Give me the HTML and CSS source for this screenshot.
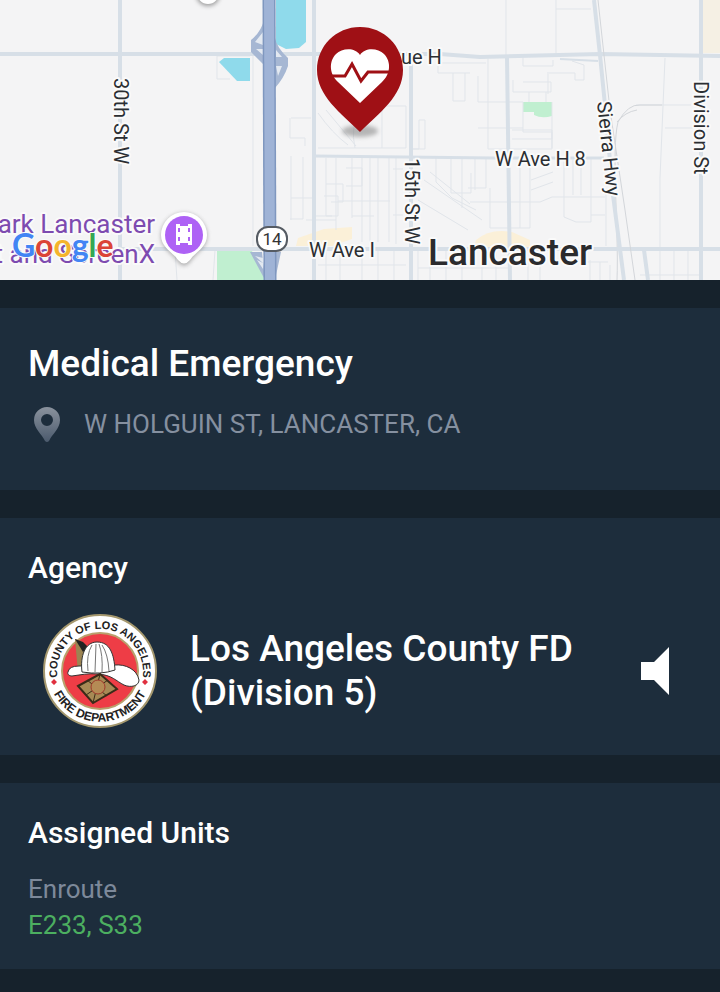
FILE: index.html
```html
<!DOCTYPE html>
<html lang="en">

<head>
    <meta charset="UTF-8">
    <meta name="viewport" content="width=device-width, initial-scale=1.0">
    <title>Medical Emergency</title>
    <link rel="stylesheet" href="styles.css">
</head>

<body>

    <div class="map">
        <svg class="map-canvas" viewBox="0 0 720 280" preserveAspectRatio="xMidYMid slice" role="img" aria-label="Map of Lancaster">
            <defs>
                <filter id="soft" x="-50%" y="-50%" width="200%" height="200%">
                    <feGaussianBlur stdDeviation="2" />
                </filter>
            </defs>
            <rect width="720" height="280" fill="#f4f4f5" />

            <!-- land and water -->
            <path d="M703 0h17v53h-17z" fill="#f5f0e4" />
            <path d="M276 0h30v42l-7 6-13 1-10-5z" fill="#8fdaeb" />
            <path d="M219 62l5-4h26v23h-13z" fill="#8fdaeb" />
            <path d="M217 251h35l13 29h-48z" fill="#c0efd0" />
            <path d="M523 102h29v14q-10 3-18-1v-3h-11z" fill="#c0efd0" />
            <path d="M298 238l26-9 28-2v12l-20 7h-36z" fill="#fbf0d8" />
            <path d="M476 240q14-12 36-8l18 8v8h-56z" fill="#fbf0d8" />

            <!-- small streets -->
            <g fill="none" stroke="#e1e5ea" stroke-width="1">
                <path d="M253 56v190M250 56h-33v23h13" />
                <path d="M291 118h20M290 118v20h15v8M291 156v64M291 198h22M303 157v62h-13M313 106v50" />
                <path d="M318 113q14 20 30 32M326 110l30 36M348 106h58v42h-88M382 106v42M360 107q-10 20-5 41M419 120v29h-8M419 120h6v29h-14" />
                <path d="M326 158v58h12v-20h-14M336 158v72M352 158v60M362 158v84M370 158v84M378 158v84M389 158v84M326 184h17v18h-12M352 216h22M338 201h52M312 216h20M306 220h30M346 168h16v18h-16" />
                <path d="M393 169h10M393 215h10M396 158v86M436 158v24l16 16 24 12M424 180l58 40M418 200l50 30M430 172l40 32M451 158v35h20v-20M462 158v50" />
                <path d="M438 60v13h32M453 73v28h12V73M438 63h48M478 76v26h45M488 59v90M478 128h45M506 0v55M556 0v54M556 9h35" />
                <path d="M523 58v8h30v-6M513 80v12h38V82h-28M548 74v20M547 73h28v7h9V65l-12-4M529 92v10M546 92v10M523 102v30h29v17M512 130h40v9h-40M552 102v46M488 149h64" />
                <path d="M486 158v30h-18M475 158v32M470 202h70l12-5h53M490 188v40h40v-69M520 160v68M531 180l22-8M531 190l22-8M564 159v58l12 5h15v-63M573 159v36M581 159v36M591 215h14M606 190v56" />
                <path d="M665 58l-5 120v102M665 128h32M636 105h55M640 275h60M674 250v30M688 250v30M540 262v18M528 262v18M590 260v20M600 262v20M560 262h48M610 265v15" />
                <path d="M326 250v30M340 250v30M362 250v30M378 250v30M394 250v30M418 250v30M430 250v30M446 250v30M462 250v30M482 250v30M496 250v30M318 265h88M418 268h90" />
                <path d="M175 250l2 30M175 250h40l-2 30" />
            </g>
            <path d="M617 280c2-50-6-130 1-158q10-18 22-17h22M617 122q8-10 20-12" fill="none" stroke="#d3d6da" stroke-width="1" />

            <!-- main roads -->
            <g fill="none" stroke="#d7dfe7" stroke-width="4">
                <path d="M0 54h440l40 3 120-3 120 2" />
                <path d="M120 0v280" />
                <path d="M120 249h600" />
                <path d="M314 0v280M411 64v216" />
                <path d="M314 156l180 2h110" stroke-width="3" />
                <path d="M507 57l3 223M701 0v280" />
                <path d="M594 0l6 55 5 50 8 90 11 85M644 250l4 30" />
                <path d="M560 59l38 2" stroke-width="2" />
            </g>
            <path d="M598 0l12 110 15 100 10 70" fill="none" stroke="#d3d6da" stroke-width="1" />

            <!-- freeway -->
            <path d="M264 20q-3 12-13 20v12l14 14zM275 38q2 10 13 20v8q-4 12-13 22z" fill="#a6b7d3" />
            <path d="M263 32l-8 10 8 3zM263 49h-7l7 6zM276 66h6l-4 10zM276 50l6 7h-6z" fill="#e3e9f1" />
            <path d="M250 252h12l3 28zM274 252h7l-6 28z" fill="#a6b7d3" />
            <path d="M255 256l8 2v5zM257 260l6 9v-6z" fill="#e3e9f1" />
            <path d="M269 0l1 280" stroke="#7f97bf" stroke-width="13" />
            <path d="M269 0l1 280" stroke="#9fb3d6" stroke-width="10" />

            <!-- road names -->
            <g class="road-name">
                <text x="401" y="64">ue H</text>
                <text x="495" y="166">W Ave H 8</text>
                <text x="309" y="257">W Ave I</text>
                <text transform="translate(114 78) rotate(90)">30th St W</text>
                <text transform="translate(405 158) rotate(90)">15th St W</text>
                <text transform="translate(694 81) rotate(90)">Division St</text>
                <text transform="translate(597 102) rotate(84)">Sierra Hwy</text>
            </g>
            <text class="city-name" x="428" y="265">Lancaster</text>

            <rect x="257" y="227" width="30" height="24" rx="11" fill="#fff" stroke="#555b63" stroke-width="2" />
            <text class="route-number" x="272" y="245">14</text>

            <!-- cinema -->
            <text class="place-name" x="155" y="233">ark Lancaster</text>
            <text class="place-name" x="155" y="263">t and ScreenX</text>
            <path d="M184 213a23 23 0 0 0-23 23c0 13 12 17 17 26q6 7 12 0c5-9 17-13 17-26a23 23 0 0 0-23-23z" fill="#777" opacity=".6" filter="url(#soft)" />
            <path d="M184 212a23 23 0 0 0-23 23c0 13 12 17 17 25q6 7 12 0c5-8 17-12 17-25a23 23 0 0 0-23-23z" fill="#fff" />
            <circle cx="184" cy="235" r="19" fill="#ae62f5" />
            <path d="M176 224h4v2h8v-2h4v21h-4v-2h-8v2h-4z" fill="#fff" />
            <path d="M179 228v13M189 228v13" stroke="#ae62f5" stroke-width="2" stroke-dasharray="4 5" />
            <circle cx="208" cy="-6" r="12" fill="#777" opacity=".7" filter="url(#soft)" />
            <circle cx="208" cy="-7" r="11" fill="#fff" />

            <text class="google" x="12" y="257"><tspan fill="#4285f4">G</tspan><tspan fill="#db4437">o</tspan><tspan fill="#f4b42c">o</tspan><tspan fill="#4285f4">g</tspan><tspan fill="#34a853">l</tspan><tspan fill="#db4437">e</tspan></text>

            <!-- incident pin -->
            <ellipse cx="360" cy="131" rx="18" ry="6" fill="#777" opacity=".5" filter="url(#soft)" />
            <path d="M360 27c-24 0-43 19-43 43 0 26 24 43 43 62 19-19 43-36 43-62 0-24-19-43-43-43z" fill="#9f1015" />
            <path d="M360 55c-5-8-18-7-24-1-8 8-6 21 2 28l22 21 22-21c8-7 10-20 2-28-6-6-19-7-24 1z" fill="#fff" />
            <path d="M332 76h13l7-12 9 17 7-9h21" fill="none" stroke="#9f1015" stroke-width="3" />
        </svg>
    </div>

    <div class="cards">
        <div class="card incident">
            <h1>Medical Emergency</h1>
            <p class="address">
                <svg class="pin" viewBox="0 0 26 35">
                    <defs>
                        <linearGradient id="pinfade" x1="0" y1="0" x2="0" y2="1">
                            <stop offset="0" stop-color="#8a929d" />
                            <stop offset="1" stop-color="#4b5a6d" />
                        </linearGradient>
                    </defs>
                    <path d="M13 0A13 13 0 0 0 0 13c0 9 8 14 11 21q2 2 4 0c3-7 11-12 11-21A13 13 0 0 0 13 0zm0 7a6 6 0 1 1 0 12 6 6 0 0 1 0-12z" fill="url(#pinfade)" fill-rule="evenodd" />
                </svg>
                W HOLGUIN ST, LANCASTER, CA
            </p>
        </div>

        <div class="card agency">
            <h2>Agency</h2>
            <div class="agency-row">
                <svg class="seal" viewBox="0 0 116 116" role="img" aria-label="County of Los Angeles Fire Department">
                    <defs>
                        <path id="toparc" d="M16 68A43 43 0 1 1 100 68" />
                        <path id="bottomarc" d="M8 71A52 52 0 0 0 108 71" />
                    </defs>
                    <circle cx="58" cy="58" r="56" fill="#fff" stroke="#a5986e" stroke-width="2" />
                    <circle cx="58" cy="58" r="38" fill="#ee3d46" stroke="#b9a06c" stroke-width="2" />
                    <text class="seal-text"><textPath href="#toparc" startOffset="50%">COUNTY OF LOS ANGELES</textPath></text>
                    <text class="seal-text seal-bottom"><textPath href="#bottomarc" startOffset="50%">FIRE DEPARTMENT</textPath></text>
                    <path d="M12 66l3 3-3 3-3-3zM103 66l3 3-3 3-3-3z" fill="#e0303f" />
                    <!-- helmet -->
                    <path d="M33 26l6 2 6 6-5 26h-4z" fill="#9c8452" />
                    <path d="M33 26l8 3 5 5-5 5z" fill="#222" />
                    <path d="M26 59q1-6 11-6l36-1c10-1 22 4 24 15 0 6-8 8-15 5-8-4-12-10-26-11-10-1-18 1-26 2-3 0-5-2-4-4z" fill="#fff" stroke="#333" stroke-width="1" />
                    <path d="M40 59c-2-16 3-30 15-30 13 0 17 12 18 28q-14 5-33 2z" fill="#fff" stroke="#333" stroke-width="1" />
                    <path d="M46 58q-2-16 4-26M53 59l1-28M60 59q1-17-3-28M67 58q-1-17-7-26" fill="none" stroke="#777" stroke-width="1" />
                    <!-- badge -->
                    <path d="M36 73l22-12 17 15-24 14z" fill="#a78a55" stroke="#3a2b18" stroke-width="2" />
                    <path d="M45 67l20 16M66 67L44 82M58 61l-7 29" stroke="#3a2b18" stroke-width="1" />
                    <circle cx="56" cy="74" r="7" fill="#b58b55" stroke="#a13a2c" stroke-width="1" />
                </svg>
                <p class="agency-name">Los Angeles County FD (Division 5)</p>
                <button class="listen" type="button" aria-label="Listen">
                    <svg viewBox="0 0 28 48">
                        <path d="M0 15h13L28 0v48L13 33H0z" fill="#fff" />
                    </svg>
                </button>
            </div>
        </div>

        <div class="card units">
            <h2>Assigned Units</h2>
            <p class="status">Enroute</p>
            <p class="unit-list">E233, S33</p>
        </div>
    </div>

</body>

</html>
```
FILE: styles.css
```css
* {
    box-sizing: border-box;
}

body {
    margin: 0;
    background-color: #16222c;
    font-family: Roboto, sans-serif;
    color: white;
}

h1,
h2,
p {
    margin: 0;
    font-weight: 400;
}

svg {
    display: block;
}

/* map */
.map {
    height: 280px;
    overflow: hidden;
}

.map-canvas {
    width: 100%;
    height: 100%;
}

.map text {
    paint-order: stroke;
    stroke: #fafafa;
    stroke-width: 4px;
    stroke-linejoin: round;
}

.road-name {
    font-size: 20px;
    fill: #2b2e32;
}

.city-name {
    font-size: 37px;
    font-weight: 500;
    fill: #2b2b2d;
}

.map .route-number {
    font-size: 17px;
    text-anchor: middle;
    fill: #333;
    stroke: none;
}

.place-name {
    font-size: 26px;
    text-anchor: end;
    fill: #7d4bb0;
}

.map .google {
    font-family: Lato, sans-serif;
    font-size: 32px;
    font-weight: 700;
    stroke-width: 2px;
}

/* cards */
.cards {
    display: flex;
    flex-direction: column;
    gap: 28px;
    padding: 28px 0 23px;
}

.card {
    padding: 32px 28px;
    background-color: #1d2d3c;
}

h1 {
    font-size: 37px;
    line-height: 48px;
    font-weight: 500;
}

h2 {
    font-size: 30px;
    line-height: 36px;
    font-weight: 500;
}

.incident {
    padding-bottom: 48px;
}

.address {
    display: flex;
    align-items: center;
    gap: 24px;
    margin-top: 18px;
    padding-left: 6px;
    font-size: 26px;
    line-height: 36px;
    color: #8590a0;
}

.pin {
    width: 26px;
    height: 35px;
    flex: none;
}

.agency {
    padding-bottom: 26px;
}

.agency-row {
    display: flex;
    align-items: center;
    margin-top: 27px;
    padding: 0 23px 0 14px;
}

.seal {
    width: 116px;
    height: 116px;
    flex: none;
}

.seal-text {
    font-family: "Liberation Sans", sans-serif;
    font-size: 11px;
    font-weight: 700;
    text-anchor: middle;
    fill: #222;
}

.seal-bottom {
    font-size: 12px;
}

.agency-name {
    flex: 1;
    margin: 0 32px;
    font-size: 37px;
    line-height: 44px;
    font-weight: 500;
}

.listen {
    flex: none;
    padding: 0;
    border: none;
    background: none;
    cursor: pointer;
}

.listen svg {
    width: 28px;
    height: 48px;
}

.units {
    padding-bottom: 26px;
}

.status {
    margin-top: 20px;
    font-size: 26px;
    line-height: 36px;
    color: #7d899a;
}

.unit-list {
    font-size: 26px;
    line-height: 36px;
    color: #4caf60;
}
```
